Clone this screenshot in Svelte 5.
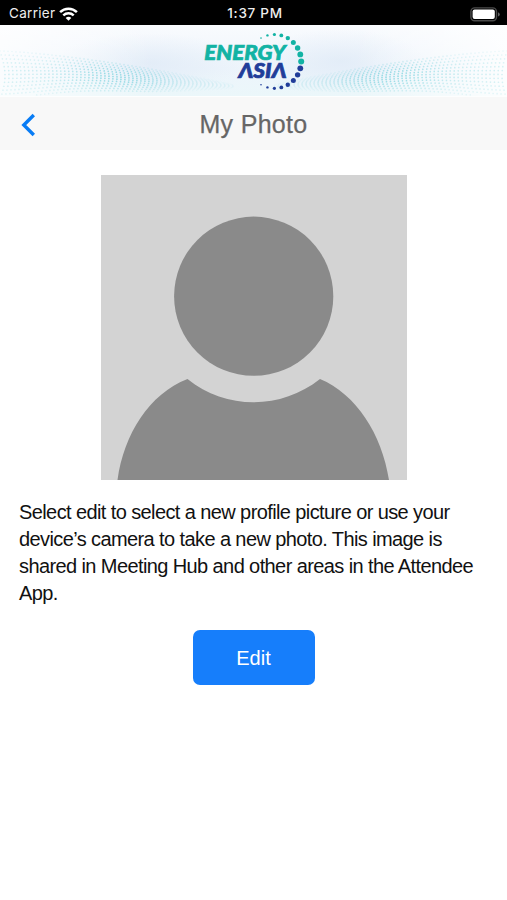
<script lang="ts">
    type Dot = { x: number, y: number, r: number, o: number }

    const sizes = [3, 2.9, 2.7, 2.5, 2.2, 1.9, 1.6, 1.2, 0.8]

    // quarter and a bit of a circle, every 15 degrees
    function arc(sign: number, from: number): Dot[] {
        return sizes.map((r, i) => {
            const a = (i * 15 * Math.PI) / 180
            return { x: 274.4 + 26.8 * Math.cos(a), y: 36.4 + sign * 26.9 * Math.sin(a), r, o: 1 }
        }).slice(from)
    }

    const tealDots = arc(-1, 0)
    const blueDots = arc(1, 1)

    // dotted wave, narrow towards the logo and wide at the edges
    function wave(right: boolean): Dot[] {
        const dots: Dot[] = []
        for (let c = 0; c < 58; c++) {
            const d = c * 4
            const t = d / 228
            const top = 26 + 32 * Math.pow(t, 1.4)
            const bottom = 70 - 6 * t
            for (let i = 0; i < 13; i++) {
                const k = i / 12
                const x = d + 5 * Math.sin(k * 3)
                const y = top + (bottom - top) * k + 3 * (1 - t) * Math.cos(d / 30) * k
                const peak = Math.exp(-Math.pow((d - 112) / 48, 2))
                const fade = d > 150 ? (240 - d) / 90 : 1
                const o = (0.22 + 0.3 * peak) * (0.4 + 0.6 * Math.sin(k * Math.PI)) * fade
                if (y < 70) dots.push({ x: right ? 507 - x : x, y, r: 0.85, o })
            }
        }
        return dots
    }

    const waves = [...wave(false), ...wave(true)]
</script>

<div class="status">
    <div class="carrier">
        <span>Carrier</span>
        <svg width="19" height="14" viewBox="0 0 19 14" fill="none" stroke="#fff" stroke-width="2.5">
            <path d="M1.1 5.1C5.8 .5 13.2 .5 17.9 5.1" />
            <path d="M4.3 8.4C7.3 5.6 11.7 5.6 14.7 8.4" />
            <path d="M9.5 13.7L6.7 10.9C8.3 9.4 10.7 9.4 12.3 10.9Z" fill="#fff" stroke="none" />
        </svg>
    </div>
    <span class="time">1:37 PM</span>
    <svg class="battery" width="31" height="15" viewBox="0 0 31 15">
        <rect x=".9" y=".9" width="25.6" height="12.9" rx="3.8" fill="none" stroke="#4b4b4b" stroke-width="1.4" />
        <rect x="2.6" y="2.6" width="22.2" height="9.5" rx="2" fill="#fff" />
        <path d="M28 5.2Q29.8 6 29.8 7.4T28 9.6Z" fill="#626262" />
    </svg>
</div>

<svg class="banner" width="507" height="72" viewBox="0 0 507 72">
    <defs>
        <linearGradient id="sky" x1="0" y1="0" x2="0" y2="1">
            <stop offset="0" stop-color="#f9fbfe" />
            <stop offset=".6" stop-color="#edf4fb" />
            <stop offset="1" stop-color="#ebf7fa" />
        </linearGradient>
        <radialGradient id="haze">
            <stop offset="0" stop-color="#dbe7f5" stop-opacity=".6" />
            <stop offset="1" stop-color="#dbe7f5" stop-opacity="0" />
        </radialGradient>
        <linearGradient id="sides">
            <stop offset="0" stop-color="#fff" stop-opacity=".75" />
            <stop offset=".3" stop-color="#fff" stop-opacity="0" />
            <stop offset=".7" stop-color="#fff" stop-opacity="0" />
            <stop offset="1" stop-color="#fff" stop-opacity=".85" />
        </linearGradient>
    </defs>
    <rect width="507" height="72" fill="url(#sky)" />
    <ellipse cx="150" cy="38" rx="95" ry="30" fill="url(#haze)" />
    <ellipse cx="340" cy="36" rx="85" ry="32" fill="url(#haze)" />
    <rect width="507" height="72" fill="url(#sides)" />
    {#each waves as d}
        <circle cx={d.x} cy={d.y} r={d.r} fill="#43c3d0" opacity={d.o} />
    {/each}
    {#each tealDots as d}
        <circle cx={d.x} cy={d.y} r={d.r} fill="#12b3a4" />
    {/each}
    {#each blueDots as d}
        <circle cx={d.x} cy={d.y} r={d.r} fill="#213d99" />
    {/each}
    <text class="word teal" x="204.300" y="35" textLength="81.500" lengthAdjust="spacingAndGlyphs">ENERGY</text>
    <text class="word blue" x="238.500" y="53" textLength="48" lengthAdjust="spacingAndGlyphs">ΛSIΛ</text>
    <rect y="71" width="507" height="1" fill="#fdfefe" />
</svg>

<header>
    <button class="back" aria-label="Back">
        <svg width="16" height="24" viewBox="0 0 16 24" fill="none" stroke="#087cf5" stroke-width="3.4">
            <path d="M13.8 2L3.8 12L13.8 22" />
        </svg>
    </button>
    <h1>My Photo</h1>
</header>

<main>
    <svg class="photo" width="306" height="305" viewBox="0 0 306 305">
        <rect width="306" height="305" fill="#d3d3d3" />
        <circle cx="152.7" cy="121.2" r="79.6" fill="#8a8a8a" />
        <path d="M16.5 305C23 259 48 219 86.500 204C125 235 180 235 219 204C255 219 281 259 288 305Z" fill="#8a8a8a" />
    </svg>
    <p>
        Select edit to select a new profile picture or use your<br />
        device’s camera to take a new photo. This image is<br />
        shared in Meeting Hub and other areas in the Attendee<br />
        App.
    </p>
    <button class="edit">Edit</button>
</main>

<style>
    :global(body) {
        background: #fff;
        font-family: "Liberation Sans", Arial, sans-serif;
    }

    .status {
        box-sizing: border-box;
        height: 25px;
        padding: 0 6px 0 9px;
        display: grid;
        grid-template-columns: 1fr auto 1fr;
        align-items: center;
        background: #000;
        color: #eee;
        font-family: Inter, sans-serif;
        font-size: 13.5px;
        line-height: 27px;
    }

    .carrier {
        display: flex;
        align-items: center;
        gap: 5px;
        letter-spacing: 0.3px;
    }

    .carrier svg {
        margin-left: -1px;
    }

    .time {
        font-weight: 500;
        letter-spacing: 0.7px;
    }

    .battery {
        justify-self: end;
        margin-top: 2px;
    }

    .banner {
        display: block;
    }

    .word {
        font: italic 900 20px Lato, "Liberation Sans", sans-serif;
        stroke-width: 0.7px;
    }

    .teal {
        fill: #12b3a4;
        stroke: #12b3a4;
    }

    .blue {
        fill: #213d99;
        stroke: #213d99;
    }

    header {
        height: 53px;
        padding: 0 20px;
        display: grid;
        grid-template-columns: 1fr auto 1fr;
        align-items: center;
        background: #f8f8f8;
    }

    .back {
        display: flex;
        padding: 2px 0 0;
        border: 0;
        background: none;
    }

    h1 {
        margin: 2px 0 0;
        color: #666;
        font-size: 25px;
        font-weight: normal;
        letter-spacing: 0.3px;
        -webkit-text-stroke: 0.25px #666;
    }

    main {
        display: flex;
        flex-direction: column;
        align-items: center;
        padding: 25px 19px 0;
    }

    .photo {
        display: block;
    }

    p {
        align-self: stretch;
        margin: 19px 0 23px;
        color: #111;
        font-size: 20px;
        line-height: 27px;
        letter-spacing: -0.6px;
        white-space: nowrap;
    }

    .edit {
        width: 122px;
        height: 55px;
        padding: 2px 0 0;
        border: 0;
        border-radius: 7px;
        background: #167efb;
        color: #fff;
        font-family: inherit;
        font-size: 20px;
    }
</style>
